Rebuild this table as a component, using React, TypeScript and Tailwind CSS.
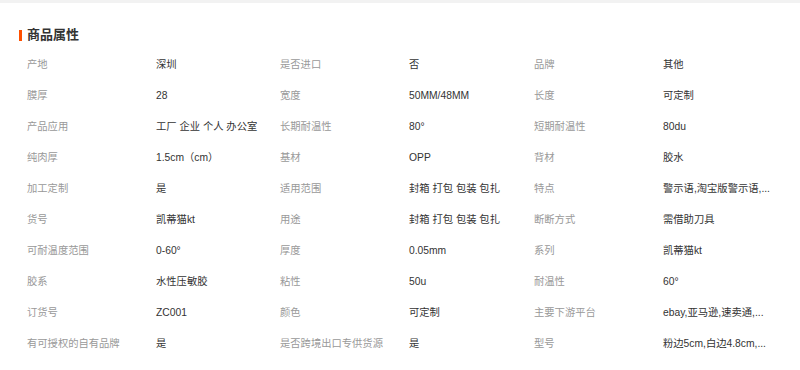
const rows: [string, string, string, string, string, string][] = [
  ['产地', '深圳', '是否进口', '否', '品牌', '其他'],
  ['膜厚', '28', '宽度', '50MM/48MM', '长度', '可定制'],
  ['产品应用', '工厂 企业 个人 办公室', '长期耐温性', '80°', '短期耐温性', '80du'],
  ['纯肉厚', '1.5cm（cm）', '基材', 'OPP', '背材', '胶水'],
  ['加工定制', '是', '适用范围', '封箱 打包 包装 包扎', '特点', '警示语,淘宝版警示语,...'],
  ['货号', '凯蒂猫kt', '用途', '封箱 打包 包装 包扎', '断断方式', '需借助刀具'],
  ['可耐温度范围', '0-60°', '厚度', '0.05mm', '系列', '凯蒂猫kt'],
  ['胶系', '水性压敏胶', '粘性', '50u', '耐温性', '60°'],
  ['订货号', 'ZC001', '颜色', '可定制', '主要下游平台', 'ebay,亚马逊,速卖通,...'],
  ['有可授权的自有品牌', '是', '是否跨境出口专供货源', '是', '型号', '粉边5cm,白边4.8cm,...'],
]

export default function App() {
  return (
    <div className="w-[800px] h-[370px] bg-white overflow-hidden font-['Liberation_Sans','Noto_Sans_CJK_SC',sans-serif] text-[10.3px]">
      <div className="h-[3px] bg-[#f2f2f2]" />

      <div className="flex items-center mt-[22px] ml-[19px] h-[20px]">
        <span className="w-[3px] h-[11px] bg-[#ff5000] mr-[5px]" />
        <h2 className="text-[13px] font-bold text-[#333]">商品属性</h2>
      </div>

      <div className="mt-[4px] ml-[27px] grid grid-cols-[129px_124px_129px_125px_129px_1fr]">
        {rows.map((r, i) =>
          r.map((cell, j) => (
            <div
              key={i + '-' + j}
              className={
                'h-[31px] leading-[31px] whitespace-nowrap ' +
                (j % 2 === 0 ? 'text-[#999]' : 'text-[#333]')
              }
            >
              {cell}
            </div>
          ))
        )}
      </div>
    </div>
  )
}
